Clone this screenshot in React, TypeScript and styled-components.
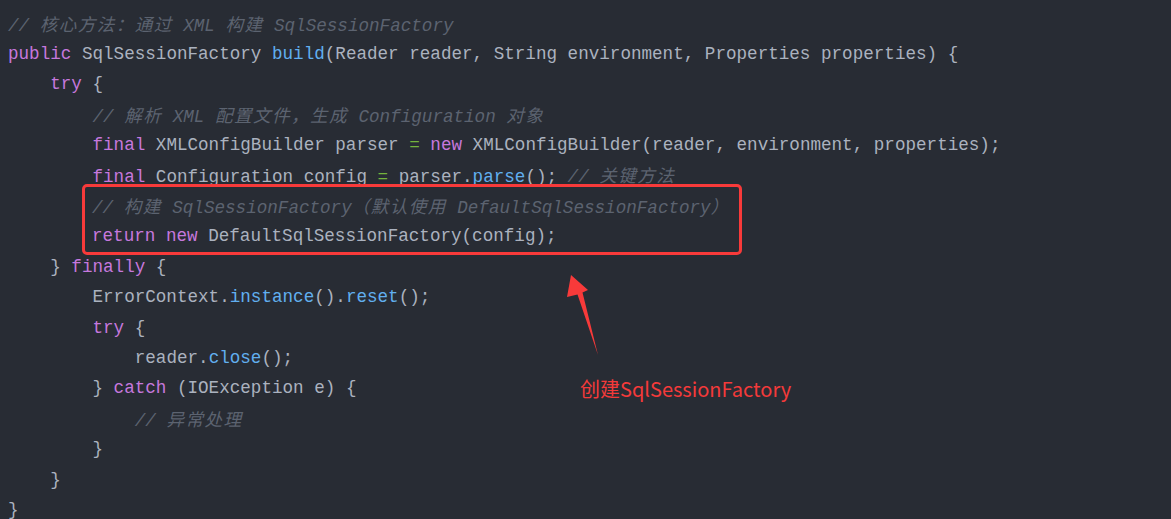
import React from "react";
import styled, { createGlobalStyle } from "styled-components";

const Global = createGlobalStyle`
  html, body { margin: 0; padding: 0; background: #282c34; }
  #root { width: 1171px; height: 519px; }
`;

const Canvas = styled.div`
  position: relative;
  width: 1171px;
  height: 519px;
  overflow: hidden;
  background: #282c34;
`;

const Code = styled.div`
  display: flex;
  flex-direction: column;
  align-items: flex-start;
  padding: 8.5px 8px 0 8px;
  font-family: "Liberation Mono", "Noto Sans CJK SC", monospace;
  font-size: 17.6px;
  color: #abb2bf;
`;

const Line = styled.div<{ $indent: number }>`
  height: 30.4px;
  line-height: 30.4px;
  white-space: pre;
  padding-left: ${(p) => p.$indent * 10.56}px;
`;

const HighlightGroup = styled.div`
  display: flex;
  flex-direction: column;
  box-sizing: border-box;
  width: 660px;
  margin: -6.4px 0 -2.8px 74px;
  padding: 3.4px 0 0 7px;
  border: 3px solid #f83a3a;
  border-radius: 5px;
`;

const Kw = styled.span`color: #c678dd;`;
const Fn = styled.span`color: #61afef;`;
const Op = styled.span`color: #74b33d;`;
const Cm = styled.span`color: #5c6370; font-style: italic;`;
const Cjk = styled.span`
  font-family: "Noto Sans CJK SC", sans-serif;
  font-size: 17.6px;
  letter-spacing: 1.4px;
`;

const ArrowSvg = styled.svg`
  position: absolute;
  left: 560px;
  top: 270px;
`;

const Caption = styled.div`
  position: absolute;
  left: 580px;
  top: 375px;
  font-family: "Noto Sans CJK SC", "Noto Sans", sans-serif;
  font-size: 20px;
  line-height: 28px;
  color: #f43a3a;
  white-space: nowrap;
`;

const CJK_RE = /([\u3000-\u303f\u4e00-\u9fff\uff00-\uffef]+)/;
const splitCjk = (s: string) =>
  s.split(CJK_RE).map((part, i) =>
    /[\u3000-\u303f\u4e00-\u9fff\uff00-\uffef]/.test(part) ? <Cjk key={i}>{part}</Cjk> : part
  );

type Tok = [string, string];
type CodeLine = { indent: number; toks: Tok[] };

const before: CodeLine[] = [
  { indent: 0, toks: [["c", "// 核心方法：通过 XML 构建 SqlSessionFactory"]] },
  {
    indent: 0,
    toks: [
      ["k", "public"],
      ["t", " SqlSessionFactory "],
      ["f", "build"],
      ["t", "(Reader reader, String environment, Properties properties) {"],
    ],
  },
  { indent: 4, toks: [["k", "try"], ["t", " {"]] },
  { indent: 8, toks: [["c", "// 解析 XML 配置文件，生成 Configuration 对象"]] },
  {
    indent: 8,
    toks: [
      ["k", "final"],
      ["t", " XMLConfigBuilder parser "],
      ["o", "="],
      ["t", " "],
      ["k", "new"],
      ["t", " XMLConfigBuilder(reader, environment, properties);"],
    ],
  },
  {
    indent: 8,
    toks: [
      ["k", "final"],
      ["t", " Configuration config "],
      ["o", "="],
      ["t", " parser."],
      ["f", "parse"],
      ["t", "(); "],
      ["c", "// 关键方法"],
    ],
  },
];

const highlighted: CodeLine[] = [
  { indent: 0, toks: [["c", "// 构建 SqlSessionFactory（默认使用 DefaultSqlSessionFactory）"]] },
  {
    indent: 0,
    toks: [
      ["k", "return"],
      ["t", " "],
      ["k", "new"],
      ["t", " DefaultSqlSessionFactory(config);"],
    ],
  },
];

const after: CodeLine[] = [
  { indent: 4, toks: [["t", "} "], ["k", "finally"], ["t", " {"]] },
  {
    indent: 8,
    toks: [
      ["t", "ErrorContext."],
      ["f", "instance"],
      ["t", "()."],
      ["f", "reset"],
      ["t", "();"],
    ],
  },
  { indent: 8, toks: [["k", "try"], ["t", " {"]] },
  { indent: 12, toks: [["t", "reader."], ["f", "close"], ["t", "();"]] },
  { indent: 8, toks: [["t", "} "], ["k", "catch"], ["t", " (IOException e) {"]] },
  { indent: 12, toks: [["c", "// 异常处理"]] },
  { indent: 8, toks: [["t", "}"]] },
  { indent: 4, toks: [["t", "}"]] },
  { indent: 0, toks: [["t", "}"]] },
];

const renderTok = ([kind, text]: Tok, i: number) => {
  switch (kind) {
    case "k":
      return <Kw key={i}>{text}</Kw>;
    case "f":
      return <Fn key={i}>{text}</Fn>;
    case "o":
      return <Op key={i}>{text}</Op>;
    case "c":
      return <Cm key={i}>{splitCjk(text)}</Cm>;
    default:
      return <React.Fragment key={i}>{text}</React.Fragment>;
  }
};

const renderLines = (ls: CodeLine[], prefix: string) =>
  ls.map((l, i) => (
    <Line key={prefix + i} $indent={l.indent}>
      {l.toks.map(renderTok)}
    </Line>
  ));

export default function App() {
  return (
    <Canvas>
      <Global />
      <Code>
        {renderLines(before, "b")}
        <HighlightGroup>{renderLines(highlighted, "h")}</HighlightGroup>
        {renderLines(after, "a")}
      </Code>
      <ArrowSvg width="45" height="90" viewBox="560 270 45 90">
        <polygon
          points="571,275 588,290 582.5,292.5 598,355 577.5,294.5 567,297"
          fill="#f83a3a"
        />
      </ArrowSvg>
      <Caption>创建SqlSessionFactory</Caption>
    </Canvas>
  );
}
